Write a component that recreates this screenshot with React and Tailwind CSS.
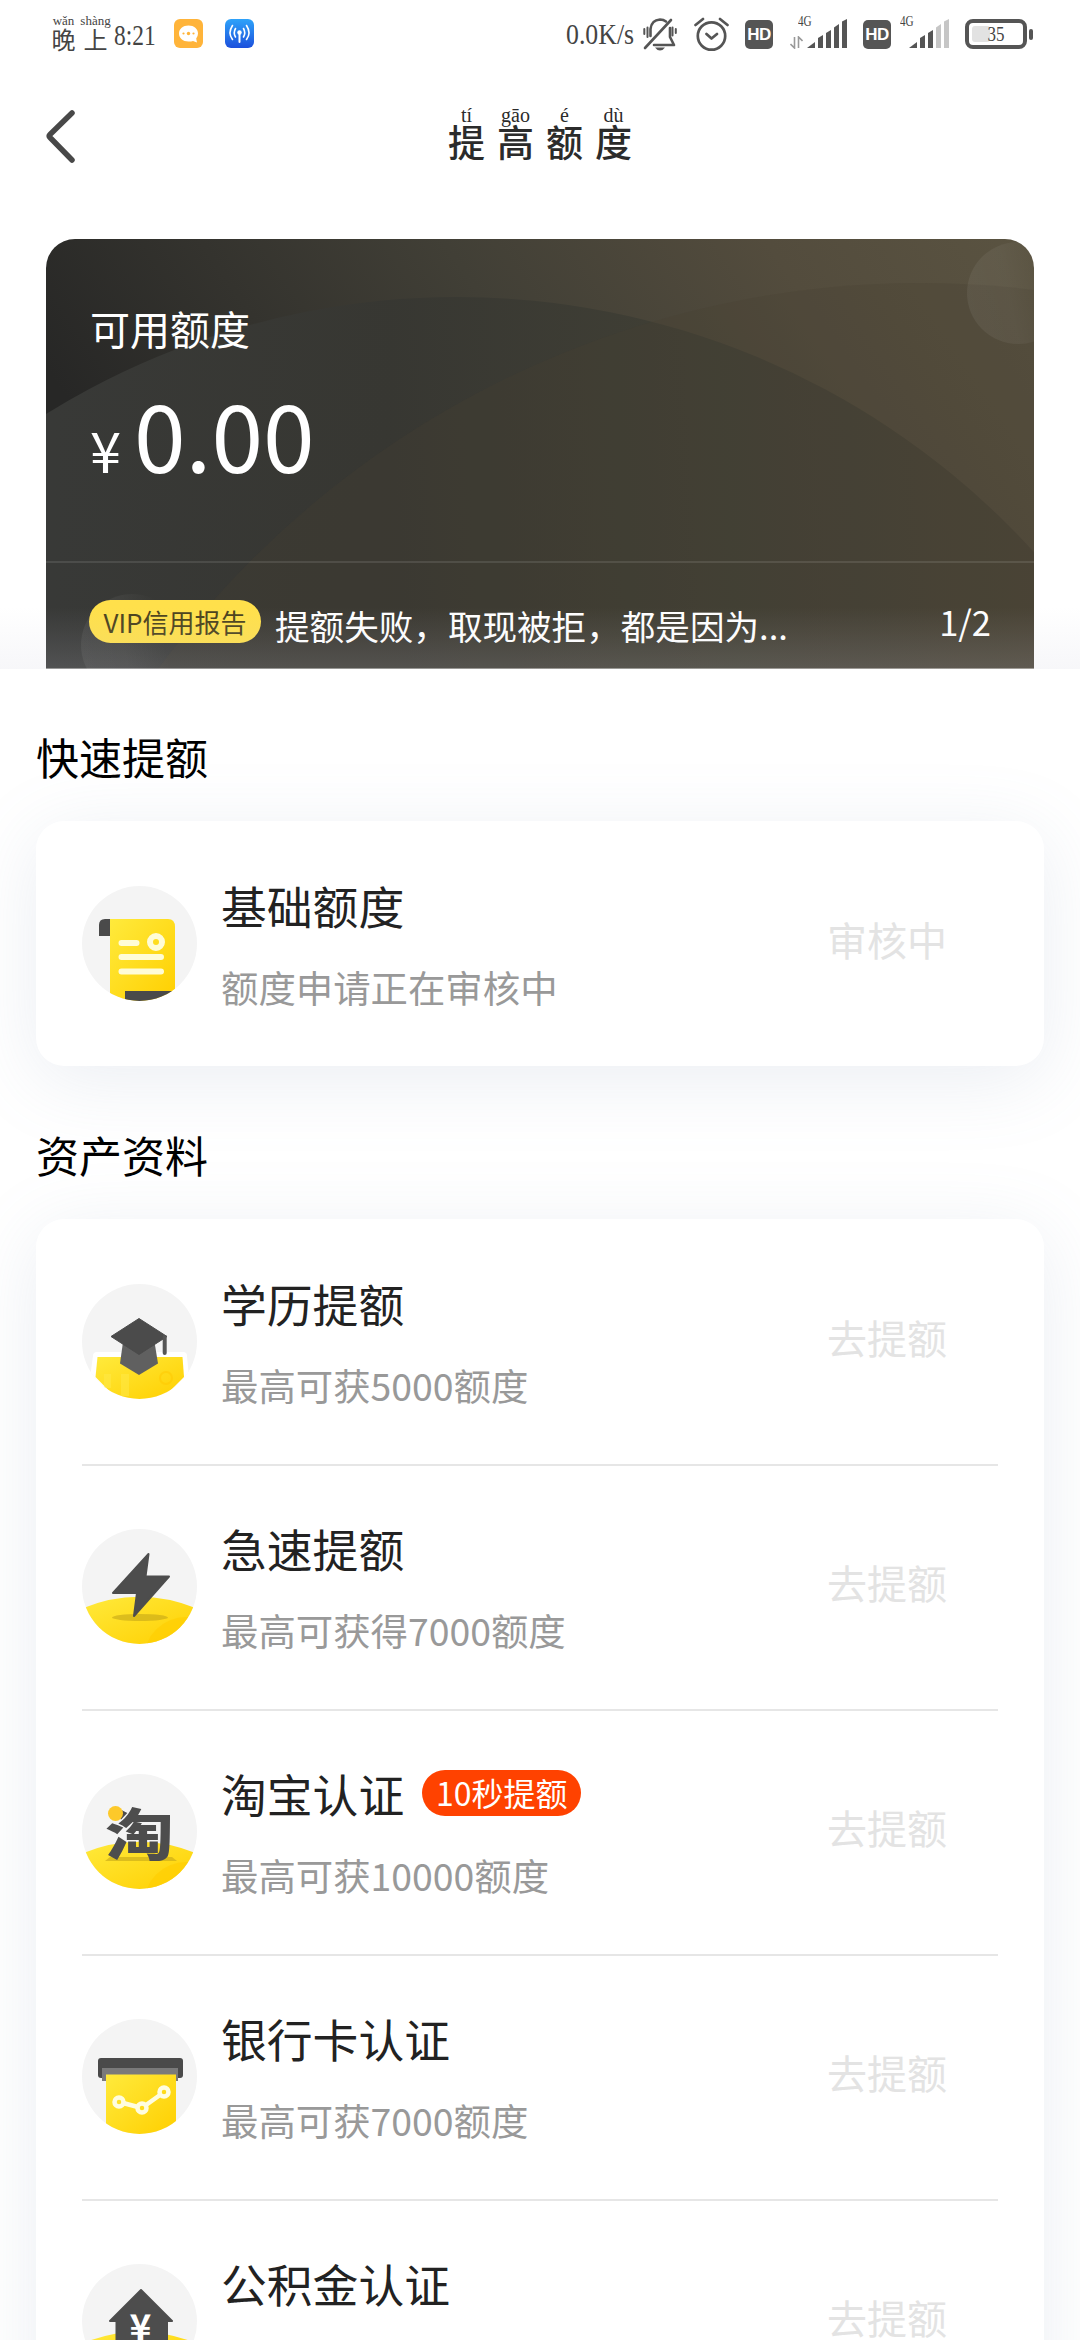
const YEN = '\u00a5'

const ASSETS = [
  { id: 'education', title: '学历提额', desc: '最高可获5000额度', icon: GraduationIcon },
  { id: 'fast', title: '急速提额', desc: '最高可获得7000额度', icon: BoltIcon },
  { id: 'taobao', title: '淘宝认证', desc: '最高可获10000额度', icon: TaobaoIcon, tag: '10秒提额' },
  { id: 'bank', title: '银行卡认证', desc: '最高可获7000额度', icon: BankCardIcon },
  { id: 'fund', title: '公积金认证', desc: '最高可获7000额度', icon: HouseIcon },
]

const TITLE = [
  ['提', 'tí'],
  ['高', 'gāo'],
  ['额', 'é'],
  ['度', 'dù'],
]

/* ---------- row icons ---------- */

// Round grey badge, everything inside is clipped to the circle
function IconBase({ id, children }) {
  return (
    <svg className="w-[115px] h-[115px] shrink-0" viewBox="0 0 115 115">
      <defs>
        <clipPath id={`${id}-clip`}>
          <circle cx="57.5" cy="57.5" r="57.5" />
        </clipPath>
        <linearGradient id={`${id}-y`} x1="0" y1="0" x2="1" y2="1">
          <stop offset="0" stopColor="#ffea3c" />
          <stop offset="1" stopColor="#ffcf00" />
        </linearGradient>
      </defs>
      <g clipPath={`url(#${id}-clip)`}>
        <rect width="115" height="115" fill="#f4f4f4" />
        {children}
      </g>
    </svg>
  )
}

function Hill({ id }) {
  return (
    <>
      <path d="M0 79.500Q57 56 115 79.500V115H0Z" fill={`url(#${id}-y)`} />
      <circle cx="104" cy="130" r="42" fill="#ffcd00" opacity="0.6" />
    </>
  )
}

function ScrollIcon() {
  return (
    <IconBase id="scroll">
      <path d="M17 50V39q0-6 6-6h6v17Z" fill="#4a4a4a" />
      <path d="M28 33H86q7 0 7 8V115H28Z" fill="url(#scroll-y)" />
      <path d="M43 105H96V115H43Z" fill="#4a4a4a" />
      <g stroke="#fffcd6" strokeWidth="6" strokeLinecap="round">
        <path d="M39.5 57H54.5M39.5 71H79M39.5 85.500H79" />
        <circle cx="74" cy="56" r="6" fill="none" />
      </g>
    </IconBase>
  )
}

function GraduationIcon() {
  return (
    <IconBase id="grad">
      <path d="M11 72q0-4 4-4H101q4 0 4 4L109 115H5Z" fill="#fff" />
      <path d="M15.500 73H100.500L102 93L80 115H35L13.500 93Z" fill="url(#grad-y)" />
      <path d="M22 90h7v14h-7ZM39 90h8v22h-8Z" fill="#ffe94a" opacity="0.5" />
      <circle cx="84" cy="94" r="6" fill="none" stroke="#ffc800" strokeWidth="2" opacity="0.5" />
      <path d="M41 58L38 79.500L57 91L76 79.500L72.500 58Z" fill="#606060" />
      <path d="M57 34.500L85 52.500L57 70.500L29 52.500Z" fill="#4b4b4b" stroke="#4b4b4b" strokeLinejoin="round" />
      <path d="M82.700 53V69" stroke="#555" strokeWidth="4" strokeLinecap="round" />
    </IconBase>
  )
}

function BoltIcon() {
  return (
    <IconBase id="bolt">
      <Hill id="bolt" />
      <ellipse cx="58" cy="88.500" rx="28" ry="3.500" fill="#c9ab18" opacity="0.65" />
      <path
        d="M66.500 25L63.500 47.500H87L52 87L55 64H31Z"
        fill="#4d4d4d"
        stroke="#4d4d4d"
        strokeWidth="2"
        strokeLinejoin="round"
      />
    </IconBase>
  )
}

function TaobaoIcon() {
  return (
    <IconBase id="tao">
      <Hill id="tao" />
      <path d="M28 83H90L95 87H23Z" fill="#c9ab18" opacity="0.65" />
      <text
        transform="translate(57.500 80.500) scale(1.22 1)"
        textAnchor="middle"
        fontSize="56"
        fontWeight="900"
        fill="#4d4d4d"
        fontFamily="'Noto Sans CJK SC', sans-serif"
      >
        淘
      </text>
      <circle cx="33.500" cy="39.500" r="7.500" fill="#fdc92a" />
    </IconBase>
  )
}

function BankCardIcon() {
  return (
    <IconBase id="bank">
      <rect x="16" y="39" width="85" height="20" rx="3" fill="#4a4a4a" />
      <rect x="20" y="49" width="76" height="13" fill="#7a7a7a" />
      <rect x="24" y="55.500" width="70" height="60" fill="url(#bank-y)" />
      <g fill="none" stroke="#fffde0" strokeWidth="4.500">
        <circle cx="37" cy="83" r="4.500" />
        <circle cx="60" cy="89" r="4.500" />
        <circle cx="82" cy="73" r="4.500" />
        <path d="M41 84L56 88M64 86L78 76" />
      </g>
    </IconBase>
  )
}

function HouseIcon() {
  return (
    <IconBase id="house">
      <Hill id="house" />
      <path
        d="M59 26L90 57H85V100H34.500V57H28Z"
        fill="#4d4d4d"
        stroke="#4d4d4d"
        strokeWidth="2"
        strokeLinejoin="round"
      />
      <text
        x="58.500"
        y="77"
        textAnchor="middle"
        fontSize="37"
        fontWeight="700"
        fill="#fff"
        fontFamily="'Noto Sans CJK SC', sans-serif"
      >
        {YEN}
      </text>
    </IconBase>
  )
}

/* ---------- status bar ---------- */

function Signal({ level }) {
  return (
    <svg className="w-10 h-[30px]" viewBox="0 0 40 30">
      {['M0 29L8 23V29Z', 'M11 19L16 16V29H11Z', 'M19 14L24 11V29H19Z', 'M27 8.500L32 5V29H27Z', 'M35 2.500L40 0V29H35Z'].map(
        (d, i) => (
          <path key={d} d={d} fill={i < level ? '#555' : '#c6c6c6'} />
        )
      )}
    </svg>
  )
}

function HdBadge({ className }) {
  return (
    <div
      className={`w-7 h-[29px] rounded-[5px] bg-[#555] flex items-center justify-center font-['Liberation_Sans',sans-serif] text-[17px] font-bold tracking-[-0.5px] text-white ${className}`}
    >
      HD
    </div>
  )
}

function StatusBar() {
  return (
    <div className="h-[68px] flex items-start pl-[50px] text-[#444] font-['Liberation_Serif','Noto_Sans_CJK_SC',serif]">
      <div className="w-[27px] pt-[13px] flex flex-col items-center">
        <span className="h-4 text-[13px] leading-4">wǎn</span>
        <span className="text-[24px] leading-[24px]">晚</span>
      </div>
      <div className="w-[37px] pt-[13px] flex flex-col items-center">
        <span className="h-4 text-[13px] leading-4">shàng</span>
        <span className="text-[24px] leading-[24px]">上</span>
      </div>
      <span className="w-[60px] pt-[20px] text-[30px] leading-[30px] origin-left scale-x-[0.78] whitespace-nowrap">8:21</span>

      {/* chat notification */}
      <svg className="mt-[19px] w-[29px] h-[29px]" viewBox="0 0 29 29">
        <rect width="29" height="29" rx="6" fill="#ffb43a" />
        <path d="M14.500 6.500C9 6.500 5 10 5 14.500S9 22.500 14.500 22.500q3 0 4.500-.6l4 1.600-.8-4Q24 17 24 14.500C24 10 20 6.500 14.500 6.500Z" fill="#fff" />
        <g fill="#ffb43a">
          <circle cx="9.500" cy="14.500" r="1.100" />
          <circle cx="14.500" cy="14.500" r="1.700" />
          <circle cx="19.500" cy="14.500" r="1.100" />
        </g>
      </svg>
      {/* hotspot */}
      <svg className="mt-[19px] ml-[22px] w-[29px] h-[29px]" viewBox="0 0 29 29">
        <defs>
          <linearGradient id="hotspot" x1="0" y1="0" x2="0" y2="1">
            <stop offset="0" stopColor="#2ea3fa" />
            <stop offset="1" stopColor="#1c50dc" />
          </linearGradient>
        </defs>
        <rect width="29" height="29" rx="6" fill="url(#hotspot)" />
        <g stroke="#fff" strokeWidth="1.600" fill="none" strokeLinecap="round">
          <path d="M14.500 14V23" strokeWidth="2" />
          <path d="M10.500 9.500q-2.500 4.500 0 8.500M18.500 9.500q2.500 4.500 0 8.500M7.500 6.500q-5 7.500 0 14M21.500 6.500q5 7.500 0 14" />
        </g>
        <circle cx="14.500" cy="13.500" r="2.200" fill="#fff" />
      </svg>

      <span className="ml-[312px] w-[77px] pt-[19px] text-[29px] leading-[30px] origin-left scale-x-[0.89] whitespace-nowrap">0.0K/s</span>

      {/* muted bell */}
      <svg className="mt-[17px] w-[34px] h-[34px]" viewBox="0 0 34 34">
        <g fill="none" stroke="#555" strokeWidth="2.600" strokeLinecap="round" strokeLinejoin="round">
          <path d="M7.500 19V12Q8.500 3 17 2.500Q20.500 2.500 23 4.500M27 11V20L31 28H11" />
          <path d="M2 31L28 3" />
          <path d="M1.300 12V17M4.500 10.500V20M29.500 10.500V18.500M32.800 12V16" strokeWidth="2" />
        </g>
        <path d="M12 30.500H22Q20 33.500 17 33.500T12 30.500Z" fill="#555" />
      </svg>
      {/* alarm */}
      <svg className="mt-[17px] ml-[17px] w-[35px] h-[35px]" viewBox="0 0 35 35">
        <g fill="none" stroke="#555" strokeWidth="2.700" strokeLinecap="round" strokeLinejoin="round">
          <circle cx="17.500" cy="19" r="13.700" />
          <path d="M12.500 17L17.500 21.500L23 17M1.500 8L9 2M33.500 8L26 2" />
        </g>
      </svg>
      <HdBadge className="mt-[20px] ml-4" />
      {/* sim 1 */}
      <div className="relative mt-[19px] ml-[34px]">
        <Signal level={5} />
        <span className="absolute -left-[9px] -top-[4px] text-[14px] leading-[14px] origin-left scale-x-[0.8]">4G</span>
        <svg className="absolute -left-[17px] top-[17px] w-[13px] h-[13px]" viewBox="0 0 13 13">
          <path d="M4.500 1V12L0.500 8M8.500 12V1L12.500 5" fill="none" stroke="#999" strokeWidth="1.600" />
        </svg>
      </div>
      <HdBadge className="mt-[20px] ml-4" />
      {/* sim 2 */}
      <div className="relative mt-[19px] ml-[18px]">
        <Signal level={3} />
        <span className="absolute -left-[9px] -top-[4px] text-[14px] leading-[14px] origin-left scale-x-[0.8]">4G</span>
      </div>
      {/* battery */}
      <div className="mt-[19px] ml-4 flex items-center">
        <div className="relative w-[62px] h-[30px] rounded-lg border-4 border-[#555] p-[3px]">
          <div className="w-[18px] h-4 rounded-[3px] bg-[#e2e2e2]" />
          <span className="absolute inset-0 flex items-center justify-center text-[20px] leading-none scale-x-[0.85]">35</span>
        </div>
        <div className="ml-[2px] w-1 h-[11px] rounded-full bg-[#555]" />
      </div>
    </div>
  )
}

function NavBar() {
  return (
    <div className="h-[171px] flex items-start">
      <svg className="mt-[41px] ml-[44px] w-[32px] h-[54px]" viewBox="0 0 32 54">
        <path d="M28 4L6 25.500Q4.500 27 6 28.500L28 51" fill="none" stroke="#484848" strokeWidth="5.500" strokeLinecap="round" />
      </svg>
      <div className="ml-[366px] mt-[35px] flex text-[#2b2b2b]">
        {TITLE.map(([char, pinyin]) => (
          <div key={char} className="w-[49px] flex flex-col items-center">
            <span className="h-5 font-['Liberation_Serif',serif] text-[20px] leading-[24px]">{pinyin}</span>
            <span className="text-[37px] leading-[36px] font-medium">{char}</span>
          </div>
        ))}
      </div>
    </div>
  )
}

/* ---------- quota card ---------- */

function QuotaCard() {
  return (
    <section className="relative h-[430px] px-[46px]">
      <div className="relative h-full rounded-t-[29px] overflow-hidden text-white">
        <svg className="absolute inset-0 w-full h-full" viewBox="0 0 988 430" preserveAspectRatio="none">
          <defs>
            <linearGradient id="quota-bg" x1="0" y1="0.3" x2="1" y2="0">
              <stop offset="0" stopColor="#272726" />
              <stop offset="0.45" stopColor="#413f36" />
              <stop offset="0.75" stopColor="#534c3d" />
              <stop offset="1" stopColor="#5a5341" />
            </linearGradient>
            <linearGradient id="quota-arc" x1="0" y1="0" x2="988" y2="0" gradientUnits="userSpaceOnUse">
              <stop offset="0" stopColor="#393a38" />
              <stop offset="0.35" stopColor="#373732" />
              <stop offset="0.7" stopColor="#414035" />
              <stop offset="1" stopColor="#4a4437" />
            </linearGradient>
            <linearGradient id="quota-dot" x1="0" y1="0.5" x2="1" y2="0.3">
              <stop offset="0" stopColor="#fff" stopOpacity="0.06" />
              <stop offset="0.4" stopColor="#fff" stopOpacity="0.05" />
              <stop offset="0.8" stopColor="#fff" stopOpacity="0" />
            </linearGradient>
          </defs>
          <rect width="988" height="430" fill="url(#quota-bg)" />
          <circle cx="411" cy="838" r="780" fill="url(#quota-arc)" opacity="0.95" />
          <circle cx="874" cy="989" r="945" fill="#484232" opacity="0.28" />
          <circle cx="972" cy="54" r="51" fill="url(#quota-dot)" />
          <circle cx="86" cy="406" r="51" fill="url(#quota-dot)" />
        </svg>

        <div className="relative h-full flex flex-col">
          <div className="h-[324px] pl-[44px] pt-[61px] border-b-2 border-white/10">
            <p className="text-[40px] leading-[56px]">可用额度</p>
            <p className="mt-[22px] flex items-baseline leading-[110px]">
              <span className="w-[44px] text-[56px]">{YEN}</span>
              <span className="text-[93px]">0.00</span>
            </p>
          </div>
          <div className="flex items-start px-[43px] pt-[37px]">
            <span className="w-[172px] h-[43px] rounded-full bg-[#ffe04b] text-center text-[26px] leading-[43px] text-[#4b421c]">
              VIP信用报告
            </span>
            <span className="ml-[14px] mt-px text-[34.600px] leading-[48px]">提额失败，取现被拒，都是因为...</span>
            <span className="ml-auto -mt-[2px] text-[34.500px] leading-[46px]">1/2</span>
          </div>
        </div>
      </div>
      {/* soft shade along the cut-off edge */}
      <div className="absolute inset-x-0 bottom-0 h-[62px] bg-linear-to-b from-[#cfcfde00] to-[#cfcfde2b]" />
      <div className="absolute inset-x-[46px] bottom-0 h-px bg-white/40" />
    </section>
  )
}

/* ---------- lists ---------- */

function Row({ icon: Icon, title, desc, tag, action }) {
  return (
    <div className="h-[245px] mx-[46px] pt-[63px] flex items-start border-t-2 border-[#e6e6e6] first:border-transparent">
      <Icon />
      <div className="ml-6">
        <div className="flex items-center h-[38px]">
          <span className="text-[45.800px]">{title}</span>
          {tag && (
            <span className="ml-[18px] -mt-px w-[159px] h-[46px] rounded-full bg-[#ff4200] text-center text-[32px] leading-[45px] text-white">
              {tag}
            </span>
          )}
        </div>
        <p className="mt-[36px] text-[37.400px] leading-[54px] text-[#999]">{desc}</p>
      </div>
      <span className="ml-auto mr-[51px] mt-[24px] text-[40px] leading-[58px] text-[#e3e3e3]">{action}</span>
    </div>
  )
}

function Section({ title, children }) {
  return (
    <section className="text-[#222]">
      <h2 className="h-[153px] pt-[57px] text-[43px] leading-[62px] text-black">{title}</h2>
      <div className="rounded-[28px] bg-white shadow-[0_14px_76px_rgba(122,144,177,0.15)]">{children}</div>
    </section>
  )
}

export default function App() {
  return (
    <div className="w-[1080px] h-[2340px] overflow-hidden bg-white font-['Noto_Sans_CJK_SC',sans-serif]">
      <StatusBar />
      <NavBar />
      <QuotaCard />
      <main className="-mt-px h-[1672px] px-9 overflow-hidden">
        <Section title="快速提额">
          <Row icon={ScrollIcon} title="基础额度" desc="额度申请正在审核中" action="审核中" />
        </Section>
        <Section title="资产资料">
          {ASSETS.map((item) => (
            <Row key={item.id} {...item} action="去提额" />
          ))}
        </Section>
      </main>
    </div>
  )
}
